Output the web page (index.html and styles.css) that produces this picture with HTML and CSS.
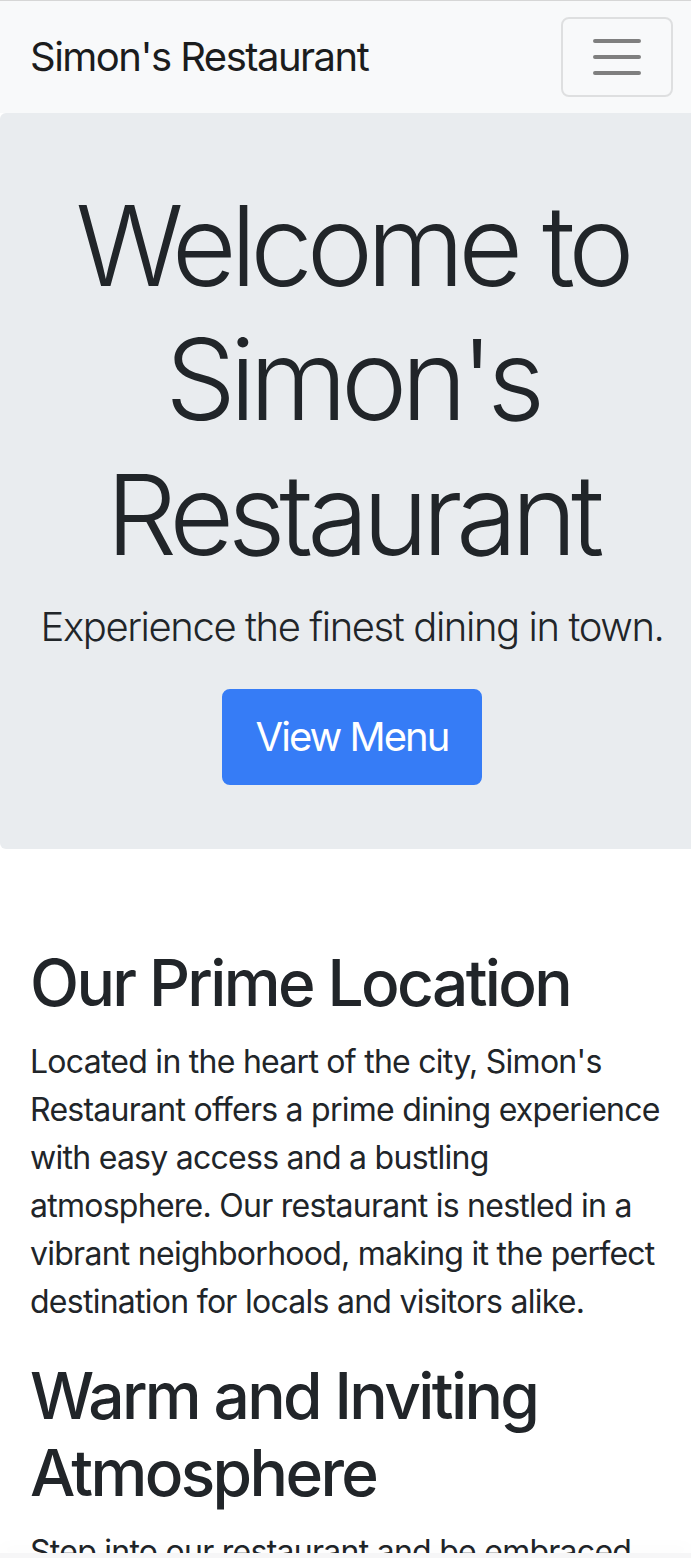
FILE: index.html
```html
<!DOCTYPE html>
<html lang="en">
<head>
<meta charset="utf-8">
<title>Simon's Restaurant</title>
<link rel="stylesheet" href="styles.css">
</head>
<body>
<div class="page">
  <nav class="navbar">
    <a class="brand" href="#">Simon's Restaurant</a>
    <button class="toggler" type="button" aria-label="Toggle navigation">
      <svg class="toggler-icon" viewBox="0 0 48 36" width="48" height="36" aria-hidden="true">
        <path d="M2 2H46M2 18H46M2 34H46" stroke="#7f7f7f" stroke-width="4" stroke-linecap="round" fill="none"/>
      </svg>
    </button>
  </nav>
  <header class="jumbotron">
    <h1 class="display">Welcome to Simon's Restaurant</h1>
    <p class="lead">Experience the finest dining in town.</p>
    <a class="btn" href="#">View Menu</a>
  </header>
  <main class="container">
    <h2>Our Prime Location</h2>
    <p>Located in the heart of the city, Simon's Restaurant offers a prime dining experience with easy access and a bustling atmosphere. Our restaurant is nestled in a vibrant neighborhood, making it the perfect destination for locals and visitors alike.</p>
    <h2>Warm and Inviting Atmosphere</h2>
    <p>Step into our restaurant and be embraced by a warm and inviting atmosphere. Our cozy interior and friendly staff create the perfect setting for a memorable meal.</p>
  </main>
</div>
<div class="bottom-bar"></div>
</body>
</html>
```
FILE: styles.css
```css
* { box-sizing: border-box; }

html, body {
  margin: 0;
  padding: 0;
  overflow-x: hidden;
}

body {
  font-family: Inter, "Liberation Sans", Arial, sans-serif;
  color: #212529;
  background: #ffffff;
  font-size: 32px;
  line-height: 1.5;
  letter-spacing: -0.023em;
}

.page {
  width: 704px;
}

.navbar {
  display: flex;
  align-items: center;
  justify-content: space-between;
  border-top: 1px solid #d6d6d6;
  background: #f8f9fa;
  padding: 16px 31px 16px 30px;
}

.brand {
  font-size: 40px;
  line-height: 1.5;
  color: #1b1c1d;
  text-decoration: none;
  letter-spacing: -0.038em;
}

.toggler {
  display: flex;
  align-items: center;
  justify-content: center;
  width: 112px;
  height: 80px;
  padding: 0;
  background: transparent;
  border: 2px solid rgba(0, 0, 0, 0.1);
  border-radius: 8px;
}

.toggler-icon {
  display: block;
}

.jumbotron {
  background: #e9ecef;
  border-radius: 6px;
  padding: 65px 20px 64px;
  margin: 0 0 64px;
  text-align: center;
}

.display {
  font-size: 112px;
  font-weight: 300;
  line-height: 1.2;
  margin: 0 0 16px;
  letter-spacing: -0.056em;
}

.lead {
  font-size: 40px;
  font-weight: 300;
  line-height: 1.5;
  margin: 0 -10px 32px;
  letter-spacing: -0.035em;
}

.btn {
  display: inline-block;
  background: #367cf6;
  color: #ffffff;
  font-size: 40px;
  line-height: 1.5;
  padding: 16px 32px;
  border: 2px solid #367cf6;
  border-radius: 8px;
  text-decoration: none;
  letter-spacing: -0.049em;
}

.container {
  padding: 32px 30px 0;
}

.container h2 {
  font-size: 64px;
  font-weight: 500;
  line-height: 1.2;
  margin: 0 0 16px;
  letter-spacing: -0.041em;
}

.container p {
  margin: 0 0 32px;
}

.bottom-bar {
  position: fixed;
  left: 0;
  right: 0;
  bottom: 0;
  height: 5px;
  background: #f6f6f7;
  box-shadow: 0 -6px 14px rgba(0, 0, 0, 0.03);
}
```
